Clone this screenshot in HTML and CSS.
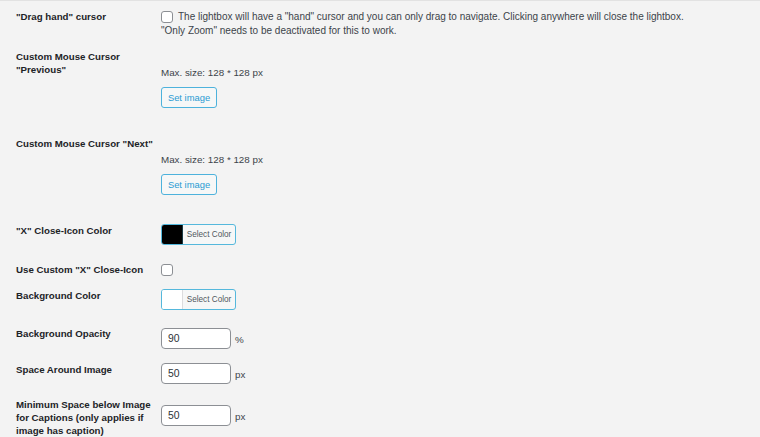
FILE: index.html
```html
<!DOCTYPE html>
<html lang="en">
<head>
<meta charset="utf-8">
<title>Lightbox settings</title>
<link rel="stylesheet" href="styles.css">
</head>
<body>
<div class="page">
  <div class="row row--desc">
    <div class="label">"Drag hand" cursor</div>
    <div class="ctrl">
      <p class="desc"><span class="checkbox"></span>The lightbox will have a "hand" cursor and you can only drag to navigate. Clicking anywhere will close the lightbox.<br>"Only Zoom" needs to be deactivated for this to work.</p>
    </div>
  </div>

  <div class="row row--media">
    <div class="label">Custom Mouse Cursor "Previous"</div>
    <div class="ctrl media">
      <div class="preview"></div>
      <p class="hint">Max. size: 128 * 128 px</p>
      <span class="btn">Set image</span>
    </div>
  </div>

  <div class="row row--media">
    <div class="label">Custom Mouse Cursor "Next"</div>
    <div class="ctrl media">
      <div class="preview"></div>
      <p class="hint">Max. size: 128 * 128 px</p>
      <span class="btn">Set image</span>
    </div>
  </div>

  <div class="row row--picker">
    <div class="label">"X" Close-Icon Color</div>
    <div class="ctrl ctrl--flex">
      <span class="picker"><span class="swatch swatch--black"></span><span class="picker-text">Select Color</span></span>
    </div>
  </div>

  <div class="row row--check">
    <div class="label">Use Custom "X" Close-Icon</div>
    <div class="ctrl ctrl--flex">
      <span class="checkbox checkbox--solo"></span>
    </div>
  </div>

  <div class="row row--picker2">
    <div class="label">Background Color</div>
    <div class="ctrl ctrl--flex">
      <span class="picker"><span class="swatch"></span><span class="picker-text">Select Color</span></span>
    </div>
  </div>

  <div class="row row--num">
    <div class="label">Background Opacity</div>
    <div class="ctrl field">
      <span class="input">90</span><span class="unit">%</span>
    </div>
  </div>

  <div class="row row--num2">
    <div class="label">Space Around Image</div>
    <div class="ctrl field field--flush">
      <span class="input">50</span><span class="unit">px</span>
    </div>
  </div>

  <div class="row">
    <div class="label">Minimum Space below Image for Captions (only applies if image has caption)</div>
    <div class="ctrl field field--low">
      <span class="input">50</span><span class="unit">px</span>
    </div>
  </div>
</div>
</body>
</html>
```

FILE: styles.css
```css
html, body {
  margin: 0;
  padding: 0;
  background: #f3f3f3;
}

body {
  font-family: "Liberation Sans", Arial, sans-serif;
  color: #1d2327;
  overflow: hidden;
}

.page {
  border-top: 1px solid #e2e2e2;
  padding-top: 9px;
  display: flex;
  flex-direction: column;
}

.row {
  display: flex;
  align-items: flex-start;
  margin-bottom: 15px;
}

.row--desc { margin-bottom: 12px; }
.row--media { margin-bottom: 29px; }
.row--picker { margin-bottom: 18px; }
.row--check { margin-bottom: 13px; }
.row--picker2 { margin-bottom: 17px; }
.row--num { margin-bottom: 14px; }
.row--num2 { margin-bottom: 14px; }

.label {
  width: 140px;
  flex: none;
  padding-left: 16px;
  padding-right: 5px;
  font-size: 9.7px;
  line-height: 13px;
  font-weight: bold;
  color: #1d2327;
}

.ctrl {
  flex: 1;
  min-width: 0;
}

.ctrl--flex {
  display: flex;
  align-items: flex-start;
}

.desc {
  margin: 0;
  font-size: 10px;
  line-height: 14px;
  color: #3c434a;
}

.checkbox {
  display: inline-block;
  box-sizing: border-box;
  width: 12px;
  height: 12px;
  border: 1px solid #8c8f94;
  border-radius: 3px;
  background: #fff;
  vertical-align: top;
  margin-top: 1px;
  margin-right: 5px;
}

.checkbox--solo {
  display: block;
  margin-right: 0;
}

.media {
  display: flex;
  flex-direction: column;
  align-items: flex-start;
}

.preview {
  height: 16px;
}

.hint {
  margin: 0;
  font-size: 9.8px;
  line-height: 14px;
  color: #3c434a;
}

.btn {
  margin-top: 7px;
  box-sizing: border-box;
  display: flex;
  align-items: center;
  justify-content: center;
  width: 56px;
  height: 21px;
  border: 1px solid #4db2dc;
  border-radius: 3px;
  background: #f6f7f7;
  color: #2a9bd3;
  font-size: 9.4px;
}

.picker {
  box-sizing: border-box;
  display: flex;
  width: 75px;
  height: 21px;
  border: 1px solid #55b8dc;
  border-radius: 3px;
  overflow: hidden;
  background: #f6f7f7;
}

.swatch {
  width: 20px;
  flex: none;
  background: #fff;
  border-right: 1px solid #dcdcde;
}

.swatch--black {
  background: #000;
  border-right-color: #1a3a44;
}

.picker-text {
  flex: 1;
  display: flex;
  align-items: center;
  justify-content: center;
  font-size: 8.2px;
  color: #50575e;
}

.field {
  display: flex;
  align-items: center;
  margin-top: 1px;
}

.field--flush { margin-top: 0; }
.field--low { margin-top: 7px; }

.input {
  box-sizing: border-box;
  width: 70px;
  height: 21px;
  border: 1px solid #8c8f94;
  border-radius: 4px;
  background: #fff;
  padding-left: 6px;
  font-size: 10.4px;
  line-height: 19px;
  color: #2c3338;
}

.unit {
  margin-left: 4px;
  margin-top: 3px;
  font-size: 9.8px;
  line-height: 12px;
  color: #3c434a;
}
```
